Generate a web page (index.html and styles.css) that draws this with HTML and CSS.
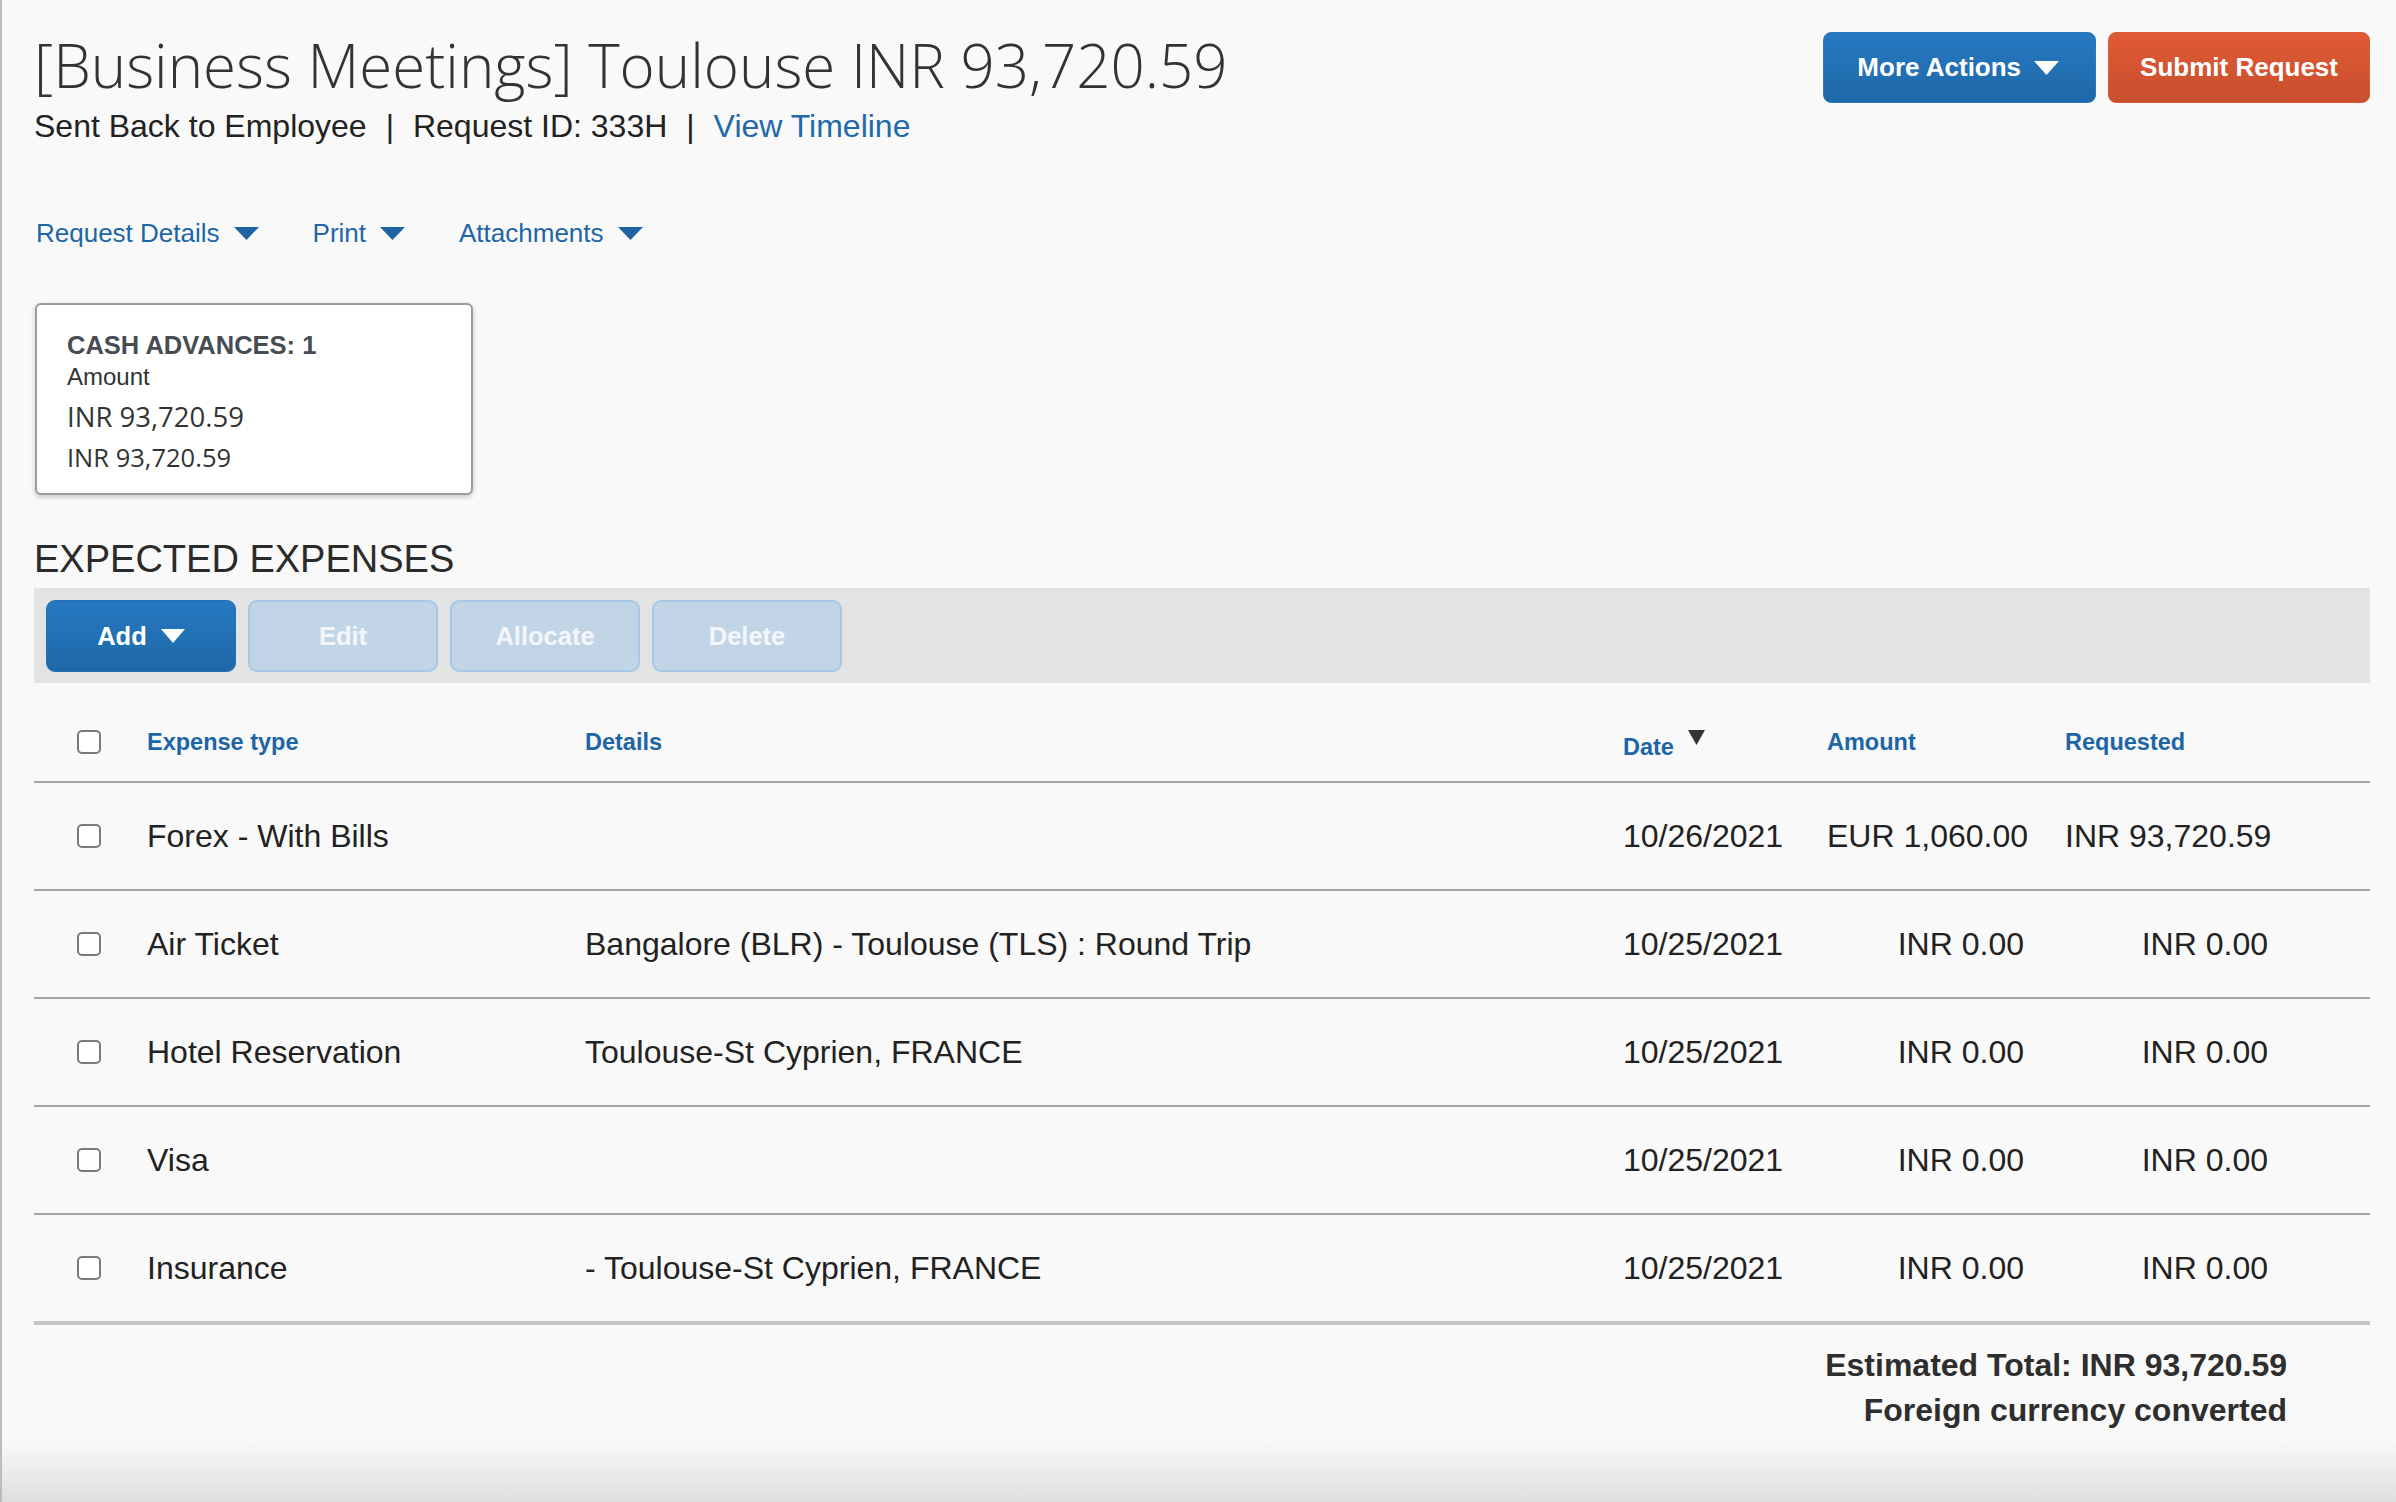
FILE: index.html
```html
<!DOCTYPE html>
<html lang="en">
<head>
<meta charset="utf-8">
<title>Request</title>
<link rel="stylesheet" href="styles.css">
</head>
<body>
<div class="page">
  <header class="top">
    <div class="heading">
      <h1 class="title">[Business Meetings] Toulouse INR 93,720.59</h1>
      <div class="meta"><span>Sent Back to Employee</span><span class="sep">|</span><span>Request ID: 333H</span><span class="sep">|</span><a class="link">View Timeline</a></div>
    </div>
    <div class="actions">
      <button class="btn btn-blue btn-more">More Actions<svg class="caret" width="25" height="14" viewBox="0 0 25 14"><polygon points="0,0 25,0 12.5,14" fill="#fff"/></svg></button>
      <button class="btn btn-orange">Submit Request</button>
    </div>
  </header>

  <nav class="tabs">
    <a class="tab">Request Details<svg class="tcaret" width="25" height="13" viewBox="0 0 25 13"><polygon points="0,0 25,0 12.5,13" fill="#2063a3"/></svg></a>
    <a class="tab">Print<svg class="tcaret" width="25" height="13" viewBox="0 0 25 13"><polygon points="0,0 25,0 12.5,13" fill="#2063a3"/></svg></a>
    <a class="tab">Attachments<svg class="tcaret" width="25" height="13" viewBox="0 0 25 13"><polygon points="0,0 25,0 12.5,13" fill="#2063a3"/></svg></a>
  </nav>

  <div class="card">
    <div class="card-title">CASH ADVANCES: 1</div>
    <div class="card-label">Amount</div>
    <div class="card-amt1">INR 93,720.59</div>
    <div class="card-amt2">INR 93,720.59</div>
  </div>

  <h2 class="section">EXPECTED EXPENSES</h2>

  <div class="toolbar">
    <button class="tbtn tbtn-add">Add<svg class="caret" width="24" height="14" viewBox="0 0 24 14"><polygon points="0,0 24,0 12,14" fill="#fff"/></svg></button>
    <button class="tbtn tbtn-off">Edit</button>
    <button class="tbtn tbtn-off">Allocate</button>
    <button class="tbtn tbtn-off">Delete</button>
  </div>

  <div class="table">
    <div class="tr thead">
      <span class="cell"><input type="checkbox" class="cb"></span>
      <span class="th">Expense type</span>
      <span class="th">Details</span>
      <span class="th th-date"><span class="dlabel">Date</span><svg class="sort" width="17" height="15" viewBox="0 0 17 15"><polygon points="0,0 17,0 8.5,15" fill="#333"/></svg></span>
      <span class="th">Amount</span>
      <span class="th">Requested</span>
    </div>
    <div class="tr">
      <span class="cell"><input type="checkbox" class="cb"></span>
      <span class="td">Forex - With Bills</span>
      <span class="td"></span>
      <span class="td">10/26/2021</span>
      <span class="td num">EUR 1,060.00</span>
      <span class="td req">INR 93,720.59</span>
    </div>
    <div class="tr">
      <span class="cell"><input type="checkbox" class="cb"></span>
      <span class="td">Air Ticket</span>
      <span class="td">Bangalore (BLR) - Toulouse (TLS) : Round Trip</span>
      <span class="td">10/25/2021</span>
      <span class="td num">INR 0.00</span>
      <span class="td req">INR 0.00</span>
    </div>
    <div class="tr">
      <span class="cell"><input type="checkbox" class="cb"></span>
      <span class="td">Hotel Reservation</span>
      <span class="td">Toulouse-St Cyprien, FRANCE</span>
      <span class="td">10/25/2021</span>
      <span class="td num">INR 0.00</span>
      <span class="td req">INR 0.00</span>
    </div>
    <div class="tr">
      <span class="cell"><input type="checkbox" class="cb"></span>
      <span class="td">Visa</span>
      <span class="td"></span>
      <span class="td">10/25/2021</span>
      <span class="td num">INR 0.00</span>
      <span class="td req">INR 0.00</span>
    </div>
    <div class="tr tr-last">
      <span class="cell"><input type="checkbox" class="cb"></span>
      <span class="td">Insurance</span>
      <span class="td">- Toulouse-St Cyprien, FRANCE</span>
      <span class="td">10/25/2021</span>
      <span class="td num">INR 0.00</span>
      <span class="td req">INR 0.00</span>
    </div>
  </div>

  <div class="totals">
    <div>Estimated Total: INR 93,720.59</div>
    <div>Foreign currency converted</div>
  </div>
</div>
</body>
</html>
```

FILE: styles.css
```css
* { box-sizing: border-box; }

html, body {
  margin: 0;
  padding: 0;
}

body {
  font-family: "Liberation Sans", Arial, sans-serif;
  color: #222;
  background: #f9f9f9;
}

.page {
  min-height: 100vh;
  border-left: 2px solid #bcbcbc;
  padding: 32px 26px 0 32px;
  background: linear-gradient(to bottom, #f9f9f9 0, #f9f9f9 calc(100% - 62px), #dedede 100%);
}

/* ---------- header ---------- */
.top {
  display: flex;
  justify-content: space-between;
  align-items: flex-start;
}

.title {
  margin: 0;
  font-family: "Open Sans", sans-serif;
  font-weight: 300;
  font-size: 60px;
  line-height: 64px;
  letter-spacing: 0;
  color: #333;
  padding-top: 1px;
}

.meta {
  margin-top: 9px;
  font-size: 32px;
  line-height: 40px;
  color: #222;
  display: flex;
  align-items: center;
}

.sep {
  margin: 0 19px;
}

.link {
  color: #2069ab;
  text-decoration: none;
}

.actions {
  display: flex;
  gap: 12px;
}

.btn {
  height: 71px;
  border-radius: 8px;
  font-family: "Liberation Sans", Arial, sans-serif;
  font-weight: bold;
  font-size: 26px;
  color: #fff;
  display: flex;
  align-items: center;
  gap: 13px;
  cursor: pointer;
}

.btn-blue {
  border: 1px solid #2b79be;
  background: linear-gradient(#2679c1, #1f68a8);
  padding: 0 36px 0 33px;
}

.btn-orange {
  border: 1px solid #dd5a38;
  background: linear-gradient(#e05a35, #c84f2e);
  padding: 0 31px;
}

/* ---------- tabs ---------- */
.tabs {
  margin-top: 72px;
  display: flex;
  gap: 54px;
  padding-left: 2px;
}

.tab {
  display: flex;
  align-items: center;
  gap: 14px;
  font-size: 26px;
  line-height: 30px;
  color: #1e66a6;
}

/* ---------- card ---------- */
.card {
  margin-top: 55px;
  margin-left: 1px;
  width: 438px;
  background: #fff;
  border: 2px solid #9c9c9c;
  border-radius: 6px;
  box-shadow: 0 2px 5px rgba(0, 0, 0, 0.22);
  padding: 25px 20px 18px 30px;
}

.card-title {
  font-weight: bold;
  font-size: 25.5px;
  line-height: 30px;
  color: #474c52;
}

.card-label {
  font-size: 24px;
  line-height: 34px;
  color: #333;
}

.card-amt1 {
  font-family: "Open Sans", sans-serif;
  font-size: 27.5px;
  line-height: 46px;
  color: #333;
}

.card-amt2 {
  font-family: "Open Sans", sans-serif;
  font-size: 25.5px;
  line-height: 35px;
  color: #333;
}

/* ---------- section ---------- */
.section {
  margin: 42px 0 0;
  font-weight: normal;
  font-size: 38px;
  line-height: 44px;
  color: #2b2b2b;
}

.toolbar {
  margin-top: 7px;
  background: #e2e4e3;
  padding: 12px 12px 11px;
  display: flex;
  gap: 12px;
}

.tbtn {
  width: 190px;
  height: 72px;
  border-radius: 9px;
  font-family: "Liberation Sans", Arial, sans-serif;
  font-weight: bold;
  font-size: 25.5px;
  display: flex;
  align-items: center;
  justify-content: center;
  gap: 14px;
  color: #fff;
}

.tbtn-add {
  border: 1px solid #2470b4;
  background: linear-gradient(#2679c1, #1f68a8);
  padding-right: 6px;
}

.tbtn-off {
  border: 2px solid #a8c7e5;
  background: #c2d5e6;
  color: #f3f7fb;
}

/* ---------- table ---------- */
.tr {
  display: grid;
  grid-template-columns: 70px 438px 1038px 204px 238px 203px;
  align-items: center;
  padding-left: 43px;
  height: 108px;
  border-bottom: 2px solid #a3a3a3;
}

.thead {
  height: 100px;
  padding-top: 20px;
}

.tr-last {
  border-bottom: 4px solid #c3c3c3;
  height: 110px;
}

.cell {
  display: flex;
  align-items: center;
}

.cb {
  appearance: none;
  -webkit-appearance: none;
  margin: 0;
  width: 24px;
  height: 24px;
  border: 2px solid #7a7a7a;
  border-radius: 5px;
  background: #fff;
}

.th {
  font-weight: bold;
  font-size: 23.5px;
  line-height: 28px;
  color: #1d65a5;
}

.th-date {
  display: flex;
  align-items: flex-start;
  gap: 14px;
}

.dlabel {
  margin-top: 10px;
}

.sort {
  margin-top: 7px;
}

.td {
  font-size: 32px;
  line-height: 40px;
  color: #222;
  white-space: nowrap;
}

.num {
  text-align: right;
  padding-right: 41px;
}

.req {
  text-align: right;
}

/* ---------- totals ---------- */
.totals {
  margin-top: 18px;
  padding-right: 83px;
  text-align: right;
  font-weight: bold;
  font-size: 32px;
  line-height: 45px;
  color: #2e2e2e;
}
```
